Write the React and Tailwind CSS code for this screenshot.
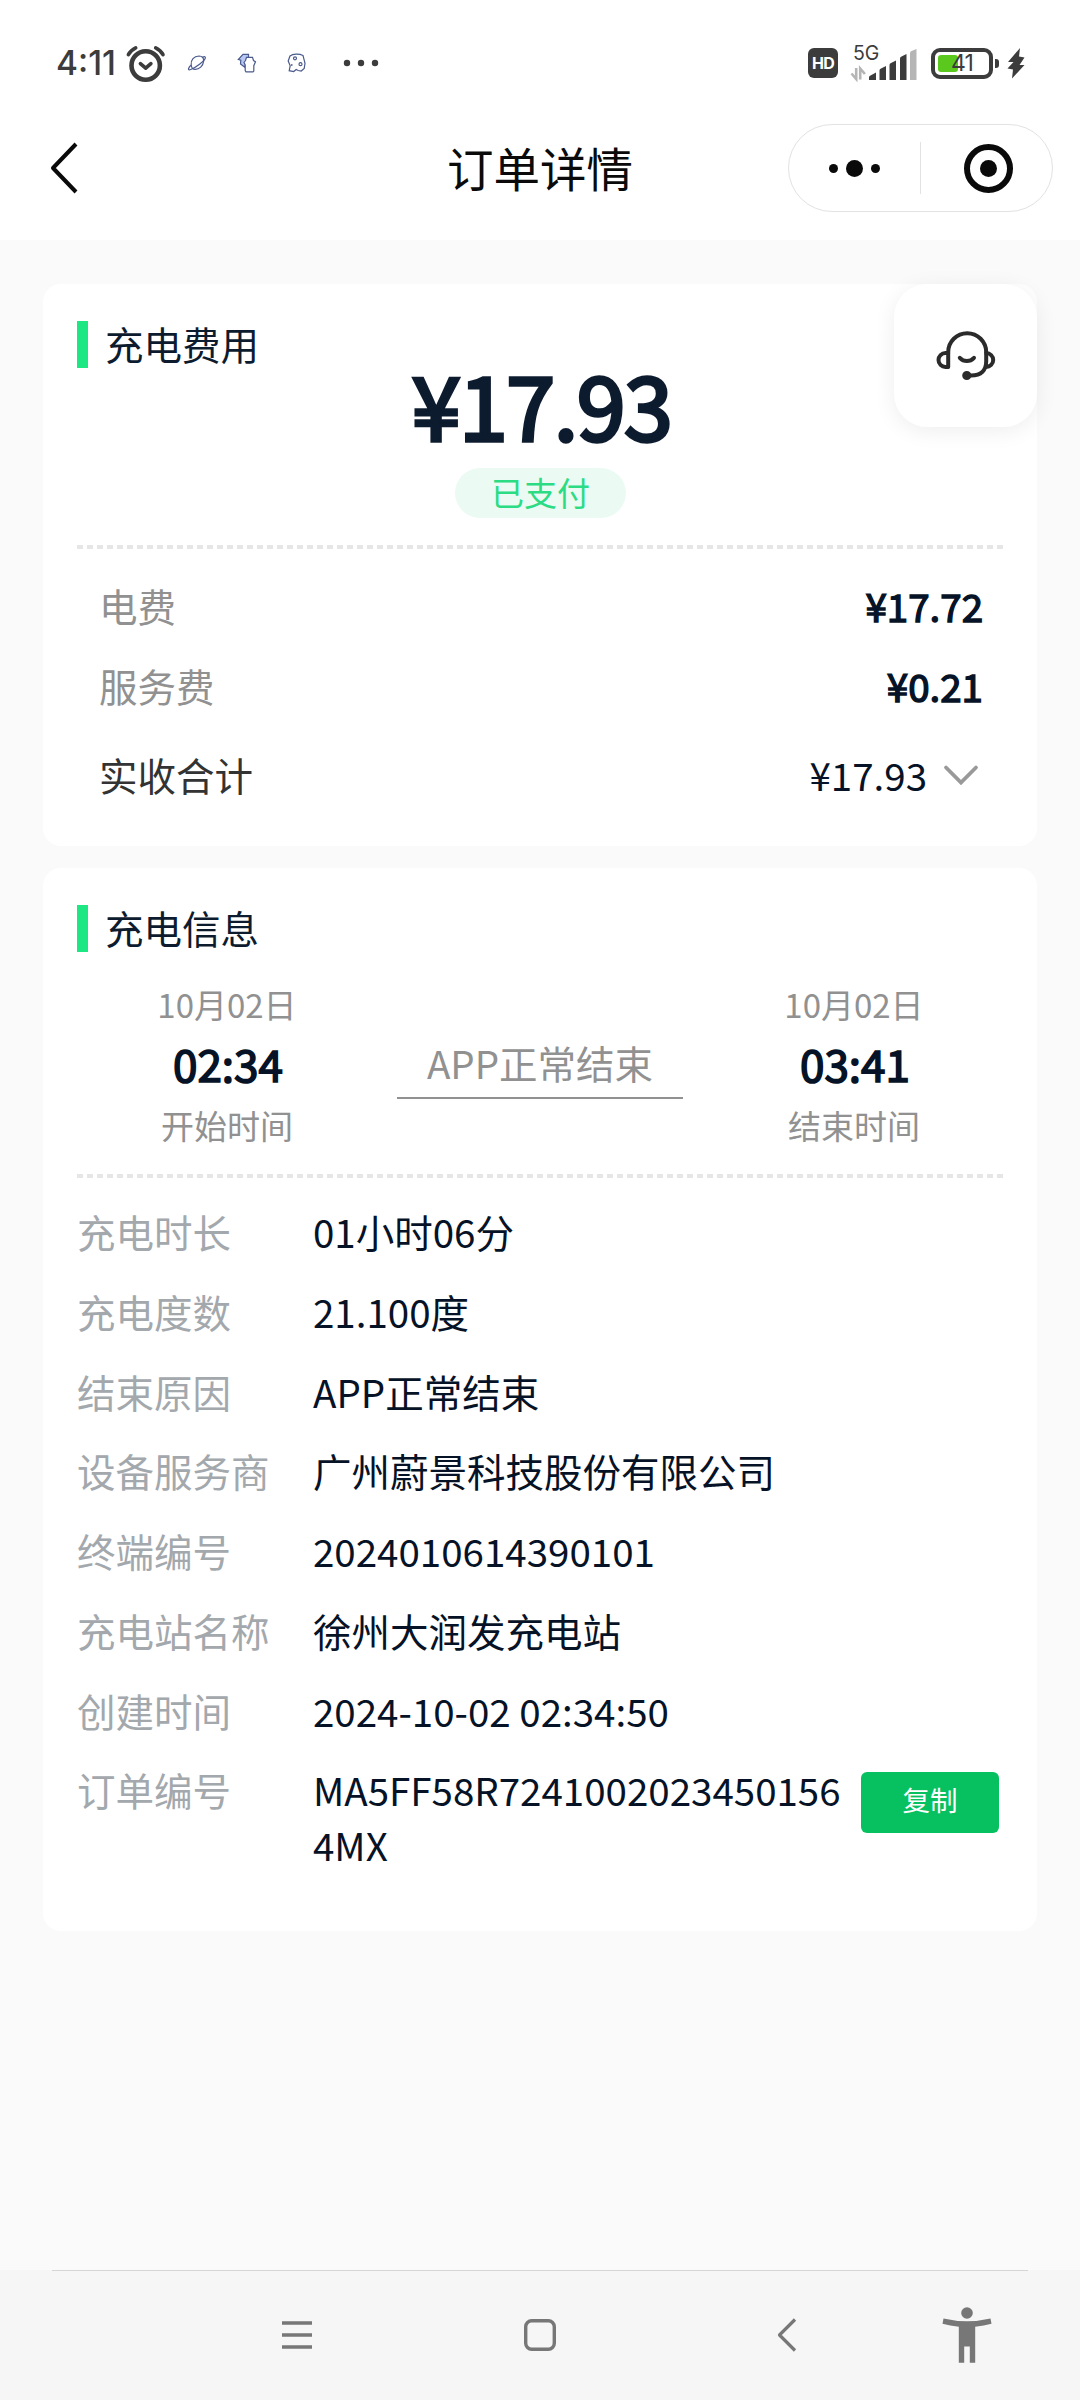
import { Fragment } from 'react';

const DETAILS = [
  { label: '充电时长', value: '01小时06分' },
  { label: '充电度数', value: '21.100度' },
  { label: '结束原因', value: 'APP正常结束' },
  { label: '设备服务商', value: '广州蔚景科技股份有限公司' },
  { label: '终端编号', value: '2024010614390101' },
  { label: '充电站名称', value: '徐州大润发充电站' },
  { label: '创建时间', value: '2024-10-02 02:34:50' },
  { label: '订单编号', value: 'MA5FF58R72410020234501564MX', copy: true },
];

const FEES = [
  { label: '电费', value: '¥17.72' },
  { label: '服务费', value: '¥0.21' },
];

function StatusBar() {
  return (
    <div className="flex h-[126px] items-center pl-[56px] pr-[55px] font-['Inter',sans-serif] text-[#3c3c3c]">
      <span className="w-[69px] pt-[2px] text-[33.5px] font-medium leading-none">4:11</span>
      {/* alarm */}
      <svg className="h-[40px] w-[42px] shrink-0" viewBox="0 0 42 40" fill="none" stroke="#3c3c3c" strokeLinecap="round" strokeLinejoin="round">
        <circle cx="20.7" cy="22.5" r="14.2" strokeWidth="4.6" />
        <path d="M15.4 20.6l5.3 4.6 5.2-4.6" strokeWidth="3.6" />
        <path d="M3.4 11.6c1.6-3 4-5.2 7.3-6.8M38 11.6c-1.6-3-4-5.2-7.3-6.8" strokeWidth="3.6" />
      </svg>
      {/* notifications */}
      <svg className="ml-[20px] h-[20px] w-[20px] shrink-0" viewBox="0 0 20 20" fill="none" stroke="#4a5a8c" strokeWidth="1.2">
        <path d="M4.2 12C3.5 7 7 3.2 12 3c3.5 0 5 2.2 4.6 5.4-.6 4.6-4.2 8-8.4 8-2.4 0-3.7-1.6-4-4.4z" />
        <path d="M15.4 4.2c2.3-1 3.3-.6 2.9.9-.8 3-9 9-14 11.1-2.4 1-3.1.8-2.7-.7.3-1 1-1.900 2.400-3.200" />
      </svg>
      <svg className="ml-[30px] h-[20px] w-[20px] shrink-0" viewBox="0 0 20 20" stroke="#4a5a8c" strokeWidth="1.2">
        <path d="M11.5 5V1.3H6L1.3 6.5l2.5.8-.3 3.7 4 3z" fill="#b9c8f2" />
        <path d="M9.5 4.3h6l1 3.2 2 1.2-1.7 4v5.4l-.8.8H9l-.8-1.300V12L7 9.500l1.500-2z" fill="#fff" />
      </svg>
      <svg className="ml-[30px] h-[20px] w-[20px] shrink-0" viewBox="0 0 20 20" fill="none" stroke="#4a5a8c" strokeWidth="1.2">
        <path d="M3 3c3-2.2 9-2.4 13-.5l1 3.8 1 4-.8 5.2-3 2.5-3-.5-2-1-2.5 2-4.5-.8 1-5L1.2 8z" />
        <circle cx="8" cy="5.3" r="1.5" />
        <circle cx="13.5" cy="11.2" r="1.5" />
        <path d="M4.8 11v2" />
      </svg>
      <svg className="ml-[35px] h-[8px] w-[38px] shrink-0" viewBox="0 0 38 8" fill="#3c3c3c">
        <circle cx="5" cy="4" r="3.2" />
        <circle cx="19" cy="4" r="3.2" />
        <circle cx="33" cy="4" r="3.2" />
      </svg>

      <div className="ml-auto flex items-center">
        <div className="flex h-[30px] w-[30px] items-center justify-center rounded-[6px] bg-[#3c3c3c] text-[16px] font-bold leading-none tracking-[-0.8px] text-white">
          HD
        </div>
        <div className="ml-[12px] h-[38px] w-[68px]">
          <div className="h-[18px] pl-[3px] text-[19.5px] leading-[18px]">5G</div>
          <svg className="-mt-[14px] h-[34px] w-[68px]" viewBox="0 4 68 34">
            <g fill="#3c3c3c">
              <path d="M19 36v-2.500q0-1.500 1.500-2l5.500-3V36z" />
              <path d="M29.500 36V26.500q0-1.500 1.500-2l5-2.500V36z" />
              <path d="M39.500 36V21q0-1.500 1.500-2l5-2.500V36z" />
              <path d="M50 36V14.500q0-1.500 1.500-2l5-2.500V36z" />
            </g>
            <path d="M60 36V9q0-1.500 1.500-2l5-2V36z" fill="#b5b5b5" />
            <path d="M6.200 24v11l-4.700-5.500M10.200 35.500v-11l4.700 5.500" fill="none" stroke="#b5b5b5" strokeWidth="2.6" />
          </svg>
        </div>
        <div className="ml-[13px] flex h-[31px] w-[62px] rounded-[9px] border-4 border-[#3c3c3c] p-[3px]">
          <div className="relative flex w-full items-center justify-center text-[23px] leading-none tracking-[-1px]">
            <span className="absolute left-0 top-0 h-full w-[20px] rounded-[3px] bg-[#5bc81e]" />
            <span className="relative">41</span>
          </div>
        </div>
        <span className="ml-[2px] h-[9px] w-[4px] rounded-r-[3px] bg-[#3c3c3c]" />
        <svg className="ml-[8px] h-[31px] w-[18px]" viewBox="0 0 18 31" fill="#3c3c3c">
          <path d="M13 0L1 14h5.500L.5 20.500l5.500 1-1 9L17.500 17h-5l5-7.500-5.500-1z" />
        </svg>
      </div>
    </div>
  );
}

function TitleBar() {
  return (
    <div className="flex h-[84px] items-center pl-[48px] pr-[27px]">
      <svg className="h-[54px] w-[32px]" viewBox="0 0 32 54" fill="none" stroke="#0a0a0a" strokeWidth="4">
        <path d="M28 3L5 27l23 24" strokeLinejoin="round" />
      </svg>
      <h1 className="ml-[367px] pb-[3px] text-[46.5px] leading-[60px] text-[#0a0a0a]">订单详情</h1>
      <div className="ml-auto flex h-[88px] w-[265px] items-center rounded-full border border-[#e2e2e2] bg-white">
        <div className="flex h-[52px] w-[132px] items-center justify-center gap-[8px] border-r border-[#e2e2e2]">
          <span className="h-[9px] w-[9px] rounded-full bg-[#0a0a0a]" />
          <span className="h-[17px] w-[17px] rounded-full bg-[#0a0a0a]" />
          <span className="h-[9px] w-[9px] rounded-full bg-[#0a0a0a]" />
        </div>
        <div className="flex flex-1 justify-center pl-[4px]">
          <div className="flex h-[49px] w-[49px] items-center justify-center rounded-full border-[6px] border-[#0a0a0a]">
            <span className="h-[17px] w-[17px] rounded-full bg-[#0a0a0a]" />
          </div>
        </div>
      </div>
    </div>
  );
}

function SectionTitle({ children }) {
  return (
    <div className="flex h-[47px]">
      <span className="h-full w-[11px] bg-[#1de783]" />
      <h2 className="ml-[17px] text-[38.5px] leading-[44px] text-[#0d1b2e]">{children}</h2>
    </div>
  );
}

function DashedLine() {
  return (
    <div className="h-[4px] bg-[repeating-linear-gradient(to_right,#e6e6e6_0_6px,transparent_6px_10px)]" />
  );
}

function TimePoint({ date, time, label }) {
  return (
    <div className="flex w-[300px] flex-col items-center text-[33px] leading-[40px] text-[#919191]">
      <span>{date}</span>
      <span className="mb-[15px] mt-[12px] pl-[2px] text-[44px] leading-[54px] text-[#061226] [-webkit-text-stroke:1.6px]">{time}</span>
      <span>{label}</span>
    </div>
  );
}

function SupportButton() {
  return (
    <button className="absolute right-0 top-0 flex h-[143px] w-[143px] items-center justify-center rounded-[33px] bg-white shadow-[0_4px_22px_rgba(0,0,0,0.07)]">
      <svg className="h-[60px] w-[64px]" viewBox="0 0 64 60" fill="none" stroke="#2b2b2b" strokeWidth="4" strokeLinecap="round">
        <path d="M14.2 40.5V26.2a19 19 0 0 1 38 0v9c0 9-5 14.3-15 14.3h-4" />
        <path d="M14.2 27h-2.700a7 7 0 0 0 0 14h2.700M52.200 27a7 7 0 0 1 0 14" />
        <path d="M25.800 31.800c4 4.300 10.200 4.300 14.200 0" />
        <circle cx="32.8" cy="49.5" r="2.6" fill="#2b2b2b" />
      </svg>
    </button>
  );
}

function NavBar() {
  return (
    <nav className="mt-auto h-[130px] bg-[#f6f6f6]">
      <div className="mx-[52px] h-px bg-[#d6d6d6]" />
      <div className="flex h-[127px] items-center pl-[282px] text-[#777]">
        <svg className="h-[30px] w-[30px]" viewBox="0 0 30 30" stroke="currentColor" strokeWidth="3.4">
          <path d="M0 3h30M0 15h30M0 27h30" />
        </svg>
        <svg className="ml-[211px] h-[34px] w-[34px]" viewBox="0 0 34 34" fill="none" stroke="currentColor" strokeWidth="3.4">
          <rect x="2.7" y="2.7" width="28.6" height="28.6" rx="6" />
        </svg>
        <svg className="ml-[219px] h-[34px] w-[22px]" viewBox="0 0 22 34" fill="none" stroke="currentColor" strokeWidth="3.2" strokeLinejoin="round">
          <path d="M19 1.500L3.500 17 19 32.500" />
        </svg>
        <svg className="ml-[144px] h-[56px] w-[50px]" viewBox="0 0 50 56" fill="currentColor">
          <circle cx="25" cy="6" r="5.8" />
          <path d="M1.500 11.500q23.500 5.500 47 0l1 5.200q-7.500 2.200-16.300 3v36h-5.400V39.500h-5.600v16.200h-5.400v-36Q8 18.900.5 16.700z" />
        </svg>
      </div>
    </nav>
  );
}

export default function App() {
  return (
    <div className="flex h-[2400px] w-[1080px] flex-col overflow-hidden bg-[#fafafa] font-['Noto_Sans_CJK_SC',sans-serif]">
      <header className="h-[240px] bg-white">
        <StatusBar />
        <TitleBar />
      </header>

      <main className="mt-[44px] flex flex-col gap-[22px] px-[43px]">
        <section className="relative h-[562px] rounded-[18px] bg-white pl-[34px] pr-[33px] pt-[37px]">
          <SectionTitle>充电费用</SectionTitle>
          <div className="flex flex-col items-center">
            <p className="-mt-[7px] pl-[2px] text-[88px] leading-[84px] tracking-[-1.5px] text-[#0d1b2e] [-webkit-text-stroke:3.5px]">¥17.93</p>
            <span className="mt-[23px] flex h-[50px] w-[171px] justify-center rounded-full bg-[#ebfbf3] text-[33px] leading-[48px] text-[#2bdc85]">
              已支付
            </span>
          </div>
          <div className="mt-[27px]">
            <DashedLine />
          </div>
          <div className="mt-[29px] flex flex-col gap-[25px] pl-[22px] pr-[21px] text-[38.5px] leading-[55px]">
            {FEES.map((fee) => (
              <div key={fee.label} className="flex justify-between">
                <span className="text-[#919191]">{fee.label}</span>
                <span className="text-[#061226] [-webkit-text-stroke:1.4px]">{fee.value}</span>
              </div>
            ))}
            <div className="mt-[9px] flex items-center">
              <span className="text-[#333]">实收合计</span>
              <span className="ml-auto text-[#061226]">¥17.93</span>
              <svg className="ml-[15px] mr-[3px] h-[22px] w-[38px]" viewBox="0 0 38 22" fill="none" stroke="#999" strokeWidth="3.8" strokeLinecap="round">
                <path d="M4 3.500l15 15 15-15" />
              </svg>
            </div>
          </div>
          <SupportButton />
        </section>

        <section className="h-[1063px] rounded-[18px] bg-white pl-[34px] pr-[33px] pt-[37px]">
          <SectionTitle>充电信息</SectionTitle>
          <div className="mt-[32px] flex">
            <TimePoint date="10月02日" time="02:34" label="开始时间" />
            <div className="ml-[20px] mr-[21px] mt-[54px] h-[61px] w-[286px] border-b-2 border-[#919191] text-center text-[38.5px] leading-[48px] text-[#919191]">
              APP正常结束
            </div>
            <TimePoint date="10月02日" time="03:41" label="结束时间" />
          </div>
          <div className="mt-[29px]">
            <DashedLine />
          </div>
          <dl className="mt-[26px] grid grid-cols-[236px_1fr] gap-y-[24.75px] text-[38.5px] leading-[55px]">
            {DETAILS.map((item) => (
              <Fragment key={item.label}>
                <dt className="text-[#a3a8ad]">{item.label}</dt>
                <dd className="flex text-[#061226]">
                  <span className="w-[532px] break-all">{item.value}</span>
                  {item.copy && (
                    <button className="ml-[16px] mt-[10px] flex h-[61px] w-[138px] justify-center rounded-[6px] bg-[#07c160] text-[27.5px] leading-[55px] text-white">
                      复制
                    </button>
                  )}
                </dd>
              </Fragment>
            ))}
          </dl>
        </section>
      </main>

      <NavBar />
    </div>
  );
}
